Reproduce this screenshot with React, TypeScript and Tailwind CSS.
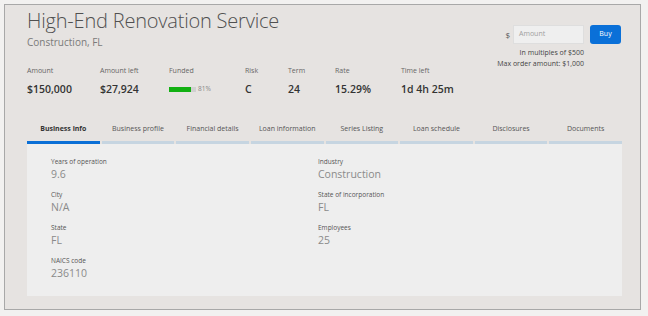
import React from "react";

const tabs = [
  "Business info",
  "Business profile",
  "Financial details",
  "Loan information",
  "Series Listing",
  "Loan schedule",
  "Disclosures",
  "Documents",
];

const stats: { label: string; value: string; w: string }[] = [
  { label: "Amount", value: "$150,000", w: "w-[73px]" },
  { label: "Amount left", value: "$27,924", w: "w-[69px]" },
  { label: "Funded", value: "", w: "w-[76px]" },
  { label: "Risk", value: "C", w: "w-[43px]" },
  { label: "Term", value: "24", w: "w-[47px]" },
  { label: "Rate", value: "15.29%", w: "w-[66px]" },
  { label: "Time left", value: "1d 4h 25m", w: "w-[80px]" },
];

function Field({ label, value }: { label: string; value: string }) {
  return (
    <div className="h-[33px]">
      <div className="text-[6.5px] leading-[10px] text-[#555]">{label}</div>
      <div className="text-[10.5px] leading-[14px] text-[#8a8a8a]">{value}</div>
    </div>
  );
}

export default function App() {
  return (
    <div
      className="w-[648px] h-[316px] bg-[#f2f1f0] pt-[4px] pl-[4px]"
      style={{ fontFamily: '"Open Sans", "Noto Sans", sans-serif' }}
    >
      <div className="w-[637px] h-[306px] border border-[#a8a8a8] bg-[#e6e3e1] flex flex-col">
        <div className="flex justify-between pl-[22px] pr-[19px]">
          <div className="flex flex-col">
            <div className="text-[20px] leading-[22px] mt-[5px] font-light text-[#505050] tracking-[-0.2px]">
              High-End Renovation Service
            </div>
            <div className="text-[10px] leading-[12px] mt-[4px] text-[#7a7a7a]">
              Construction, FL
            </div>
          </div>
          <div className="flex flex-col items-end mt-[20px]">
            <div className="flex items-center">
              <span className="text-[8px] text-[#555] mr-[3px]">$</span>
              <div className="w-[71px] h-[19px] bg-[#efefef] border border-[#dedede] flex items-center pl-[5px] text-[7px] text-[#a0a0a0]">
                Amount
              </div>
              <div className="ml-[6px] w-[31px] h-[19px] rounded-[3px] bg-[#0a70d8] flex items-center justify-center text-[7px] text-white">
                Buy
              </div>
            </div>
            <div className="mr-[37px] mt-[3px] text-[7px] leading-[11px] text-[#444] text-right">
              <div>In multiples of $500</div>
              <div>Max order amount: $1,000</div>
            </div>
          </div>
        </div>
        <div className="flex pl-[22px] mt-[-3px]">
          {stats.map((s) => (
            <div key={s.label} className={s.w}>
              <div className="text-[7px] leading-[10px] text-[#666]">{s.label}</div>
              {s.label === "Funded" ? (
                <div className="flex items-center mt-[7px] h-[12px]">
                  <div className="w-[27px] h-[5px] bg-[#d0d0d0] flex">
                    <div className="w-[22px] h-[5px] bg-[#12b012]" />
                  </div>
                  <span className="ml-[2px] text-[6.5px] text-[#888]">81%</span>
                </div>
              ) : (
                <div className="text-[10.5px] leading-[14px] mt-[6px] font-semibold text-[#333]">
                  {s.value}
                </div>
              )}
            </div>
          ))}
        </div>
        <div className="ml-[22px] mr-[18px] mt-[27px] flex flex-col">
          <div className="flex gap-[2px]">
            {tabs.map((t, i) => (
              <div key={t} className="flex-1 flex flex-col items-center">
                <div
                  className={
                    i === 0
                      ? "text-[7px] leading-[12px] font-bold text-[#333]"
                      : "text-[7px] leading-[12px] text-[#555]"
                  }
                >
                  {t}
                </div>
                <div
                  className={
                    i === 0
                      ? "mt-[6px] w-full h-[3px] bg-[#0a6fd6]"
                      : "mt-[6px] w-full h-[3px] bg-[#c6d5e1]"
                  }
                />
              </div>
            ))}
          </div>
          <div className="h-[152px] bg-[#eeeeee] flex pt-[13px]">
            <div className="w-[291px] pl-[24px] flex flex-col">
              <Field label="Years of operation" value="9.6" />
              <Field label="City" value="N/A" />
              <Field label="State" value="FL" />
              <Field label="NAICS code" value="236110" />
            </div>
            <div className="flex flex-col">
              <Field label="Industry" value="Construction" />
              <Field label="State of incorporation" value="FL" />
              <Field label="Employees" value="25" />
            </div>
          </div>
        </div>
      </div>
    </div>
  );
}
